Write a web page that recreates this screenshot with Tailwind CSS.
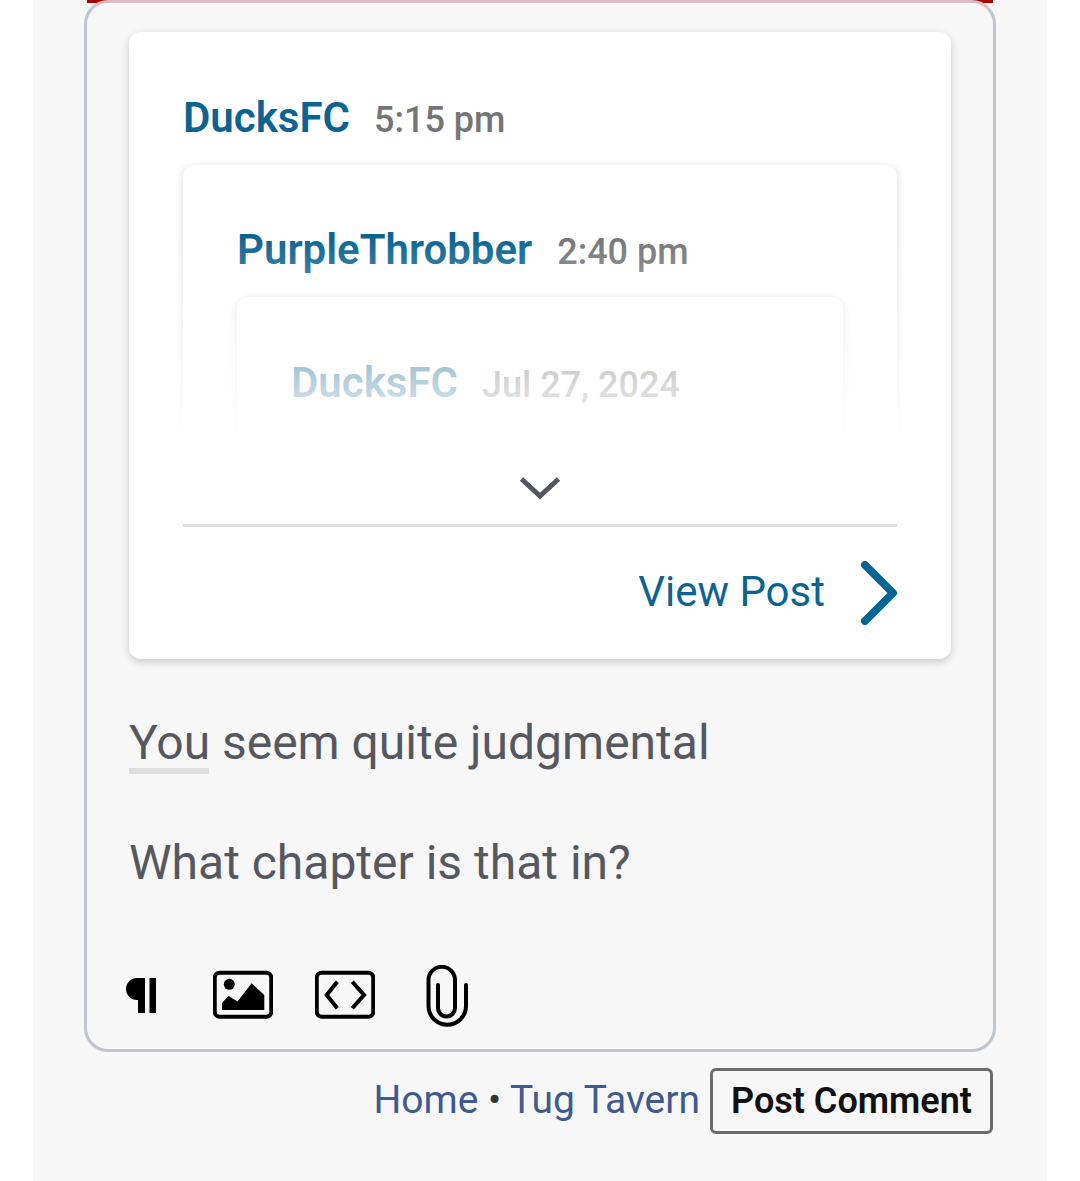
<!doctype html>
<html lang="en">
  <head>
    <meta charset="UTF-8" />
    <title>Post Comment</title>
    <script src="https://cdn.jsdelivr.net/npm/@tailwindcss/browser@4"></script>
  </head>

  <body class="bg-white font-['Roboto',sans-serif]">
    <div class="mx-[33px] w-[1014px] h-[1181px] bg-[#f7f7f8] overflow-hidden px-[51px]">
      <!-- red strip peeks out behind the top corners -->
      <div class="h-[3px] mx-[3px] bg-[#a80000]"></div>

      <div class="-mt-[3px] h-[1052px] bg-[#f7f7f8] border-[3px] border-[#c0c3d0] border-t-[#dcbcc8] rounded-[24px] pt-[29px] px-[42px]">
        <!-- quoted post card -->
        <div class="h-[627px] bg-white rounded-[12px] shadow-[0_3px_9px_rgba(0,0,0,0.18)] px-[54px] pt-[54px]">
          <div class="relative h-[385px] [clip-path:inset(0_-20px_0_-20px)]">
            <div class="flex items-baseline gap-[25px] h-[79px] leading-[63px]">
              <span class="text-[42px] font-semibold text-[#0b6391]">DucksFC</span>
              <span class="text-[36px] font-medium text-[#757575] -ml-[1px]">5:15 pm</span>
            </div>
            <div class="bg-white rounded-[12px] shadow-[0_2px_8px_rgba(0,0,0,0.16)] px-[54px] pt-[53px] h-[400px]">
              <div class="flex items-baseline gap-[25px] h-[79px] leading-[63px]">
                <span class="text-[42px] font-semibold text-[#0b6391]">PurpleThrobber</span>
                <span class="text-[36px] font-medium text-[#757575]">2:40 pm</span>
              </div>
              <div class="bg-white rounded-[12px] shadow-[0_2px_8px_rgba(0,0,0,0.16)] px-[54px] pt-[54px] h-[300px]">
                <div class="flex items-baseline gap-[25px] leading-[63px]">
                  <span class="text-[42px] font-semibold text-[#0b6391]">DucksFC</span>
                  <span class="text-[36px] font-medium text-[#757575] -ml-[1px]">Jul 27, 2024</span>
                </div>
              </div>
            </div>
            <div class="absolute inset-x-[-20px] top-[149px] bottom-[-3px] bg-gradient-to-b from-white/0 to-white to-[88%]"></div>
          </div>

          <div class="flex justify-center h-[54px] pt-[5px]">
            <svg class="w-[42px] h-[24px]" viewBox="0 0 42 24" fill="none" stroke="#54575f" stroke-width="5" stroke-linecap="butt" stroke-linejoin="miter">
              <path d="M2.5 3 L21 20 L39.5 3" />
            </svg>
          </div>

          <div class="h-[3px] bg-[#dedede] -mt-[1px]"></div>

          <div class="flex justify-end items-center gap-[36px] h-[132px] -mr-[1px]">
            <span class="text-[42px] leading-[50px] text-[#0b6391] pb-[2px]">View Post</span>
            <svg class="w-[37px] h-[64px]" viewBox="0 0 37 64" fill="none" stroke="#006494" stroke-width="8" stroke-linecap="round" stroke-linejoin="round">
              <path d="M4 4 L32 32 L4 60" />
            </svg>
          </div>
        </div>

        <!-- comment text -->
        <div class="mt-[54px] text-[48px] leading-[60px] text-[#555860]">
          <p><span class="border-b-[6px] border-[#dddddd] inline-block leading-[53px] h-[58px] w-[80px] mr-[1px]">You</span> seem quite judgmental</p>
          <p class="mt-[59px]">What chapter is that in?</p>
        </div>

        <!-- toolbar -->
        <div class="flex gap-[42px] mt-[72px] -ml-[18px] items-start">
          <svg class="w-[60px] h-[62px]" viewBox="0 0 60 62" fill="#000">
            <path d="M34 13 V48 H27 V35 H26 A11 11 0 0 1 26 13 Z" />
            <rect x="38.5" y="13" width="6.5" height="35" />
          </svg>
          <svg class="w-[60px] h-[62px]" viewBox="0 0 60 62" fill="#000">
            <rect x="1.75" y="7.75" width="56.5" height="44" rx="5" fill="none" stroke="#000" stroke-width="4" />
            <circle cx="16.3" cy="19.3" r="5.5" />
            <path d="M9 45 V38 L15.5 31 L24.5 36.5 L38.7 18.3 L51.3 30 V45 Z" />
          </svg>
          <svg class="w-[60px] h-[62px]" viewBox="0 0 60 62" fill="none" stroke="#000" stroke-width="4">
            <rect x="1.75" y="7.75" width="56.5" height="44" rx="5" />
            <path d="M22.3 16.7 L11.7 30 L22.3 43.3" />
            <path d="M37.3 16.7 L49 30 L37.3 43.3" />
          </svg>
          <svg class="w-[60px] h-[62px]" viewBox="0 0 60 62" fill="none" stroke="#000" stroke-width="4" stroke-linecap="round">
            <path d="M49 20 V41 A18.75 18.75 0 0 1 11.5 41 V15 A13.25 13.25 0 0 1 38 15 V43 A8.5 8.5 0 0 1 21 43 V20" />
          </svg>
        </div>
      </div>

      <!-- footer -->
      <div class="flex justify-end items-center mt-[16px] mr-[3px]">
        <span class="text-[39px] text-[#3f5a8f] mr-[10px] pb-[2px]">Home <span class="text-[#333]">•</span> Tug Tavern</span>
        <button class="w-[283px] h-[66px] border-[3px] border-[#6b6b6b] rounded-[6px] text-[36px] font-semibold text-[#111]">Post Comment</button>
      </div>
    </div>
  </body>
</html>
